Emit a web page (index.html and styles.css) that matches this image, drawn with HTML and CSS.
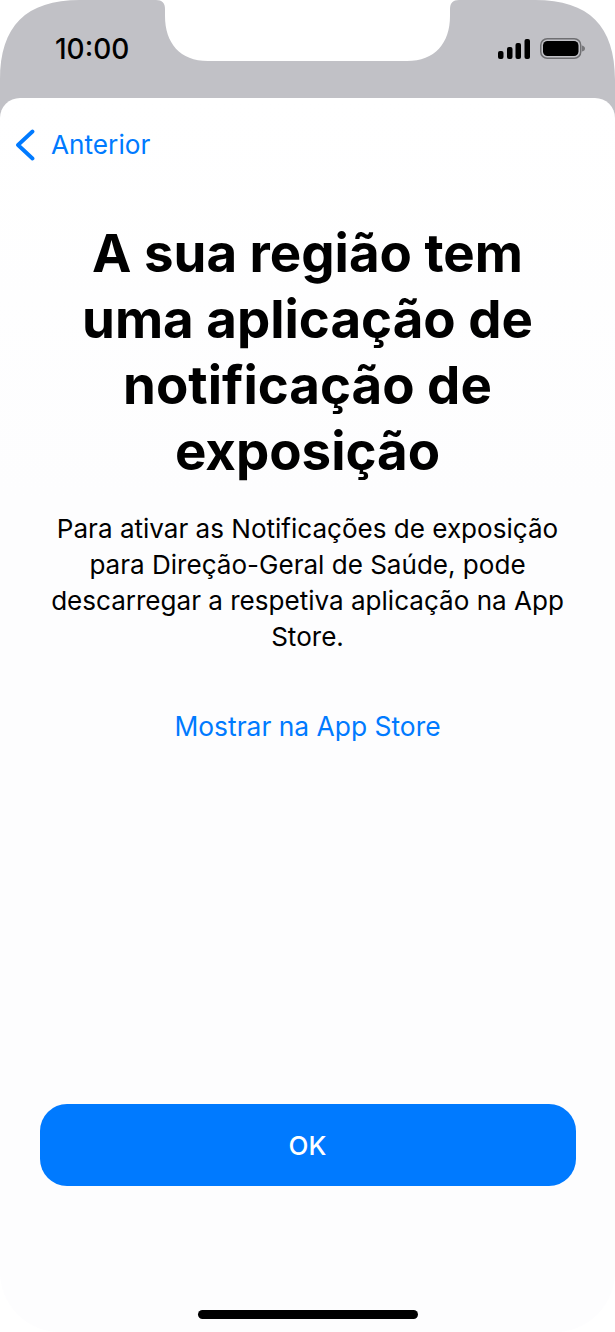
FILE: index.html
```html
<!DOCTYPE html>
<html lang="pt">
<head>
    <meta charset="UTF-8">
    <meta name="viewport" content="width=device-width, initial-scale=1.0">
    <title>Notificações de exposição</title>
    <link rel="stylesheet" href="styles.css">
</head>
<body>
    <div class="phone">
        <header class="status-bar">
            <svg class="status-shape" width="615" height="125" viewBox="0 0 615 125">
                <path fill="#c1c1c6" d="M0 125V80C0 26 26 0 80 0H156C162 0 165 3 165 9V16C165 43 180 61 208 61H407C435 61 450 43 450 16V9C450 3 453 0 459 0H535C589 0 615 26 615 80V125Z"/>
            </svg>
            <span class="clock">10:00</span>
            <div class="status-icons">
                <svg width="32" height="20" viewBox="0 0 32 20">
                    <rect x="0" y="12" width="5.500" height="8" rx="2"/>
                    <rect x="9" y="8" width="5.500" height="12" rx="2"/>
                    <rect x="17.500" y="4" width="5.500" height="16" rx="2"/>
                    <rect x="26.500" y="0" width="5.500" height="20" rx="2"/>
                </svg>
                <svg width="45" height="21" viewBox="0 0 45 21">
                    <rect x="0.750" y="0.750" width="40" height="19.500" rx="6.500" fill="none" stroke="#6f6f72" stroke-width="1.500"/>
                    <rect x="3" y="3" width="35.500" height="15" rx="4.500"/>
                    <path fill="#77777a" d="M42 7.500C44 8 45 9 45 10.500S44 13 42 13.500Z"/>
                </svg>
            </div>
        </header>

        <main class="sheet">
            <nav class="nav">
                <a class="back" href="#">
                    <svg width="20" height="32" viewBox="0 0 20 32">
                        <path d="M17.500 2.500L3 16L17.500 29.500" fill="none" stroke="#007aff" stroke-width="3.800" stroke-linecap="round" stroke-linejoin="round"/>
                    </svg>
                    <span class="back-label">Anterior</span>
                </a>
            </nav>

            <div class="content">
                <h1>A sua região tem<br>uma aplicação de<br>notificação de<br>exposição</h1>
                <p>Para ativar as Notificações de exposição<br>para Direção-Geral de Saúde, pode<br>descarregar a respetiva aplicação na App<br>Store.</p>
                <a class="store-link" href="#">Mostrar na App Store</a>
            </div>

            <button class="ok-button">OK</button>
            <div class="home-bar"></div>
        </main>
    </div>
</body>
</html>
```

FILE: styles.css
```css
* {
    box-sizing: border-box;
}
body {
    margin: 0;
    background: #fff;
    font-family: Inter, "Liberation Sans", sans-serif;
    color: #000;
}
a {
    color: #007aff;
    text-decoration: none;
}
.phone {
    width: 615px;
    height: 1332px;
    display: flex;
    flex-direction: column;
    overflow: hidden;
}
.status-bar {
    position: relative;
    height: 98px;
    flex: none;
    display: flex;
    justify-content: space-between;
    align-items: flex-start;
    padding: 33px 30px 0 55px;
}
.status-shape {
    position: absolute;
    left: 0;
    top: 0;
}
.clock {
    position: relative;
    font-size: 28px;
    line-height: 32px;
    font-weight: 500;
}
.status-icons {
    position: relative;
    display: flex;
    align-items: flex-end;
    gap: 10px;
    padding-top: 5px;
}
.sheet {
    position: relative;
    flex: 1;
    display: flex;
    flex-direction: column;
    align-items: center;
    background: linear-gradient(#fff, #fdfdfe 400px);
    border-radius: 20px 20px 60px 60px;
}
.nav {
    align-self: stretch;
    padding: 30px 0 0 15px;
}
.back {
    display: flex;
    align-items: center;
    gap: 16px;
    font-size: 26.200px;
    line-height: 32px;
}
.back-label {
    padding-top: 1px;
}
.content {
    flex: 1;
    display: flex;
    flex-direction: column;
    align-items: center;
    text-align: center;
}
h1 {
    margin: 59px 0 0;
    font-size: 52.800px;
    line-height: 66px;
    font-weight: 700;
}
p {
    margin: 27px 0 0;
    font-size: 26.050px;
    line-height: 36px;
}
.store-link {
    margin-top: 53px;
    font-size: 26.400px;
    line-height: 36px;
}
.ok-button {
    width: 536px;
    height: 82px;
    border: 0;
    border-radius: 27px;
    background: #007aff;
    color: #fff;
    font-family: inherit;
    font-size: 26px;
    font-weight: 500;
}
.home-bar {
    width: 220px;
    height: 9px;
    margin: 124px 0 13px;
    border-radius: 5px;
    background: #000;
}
```
